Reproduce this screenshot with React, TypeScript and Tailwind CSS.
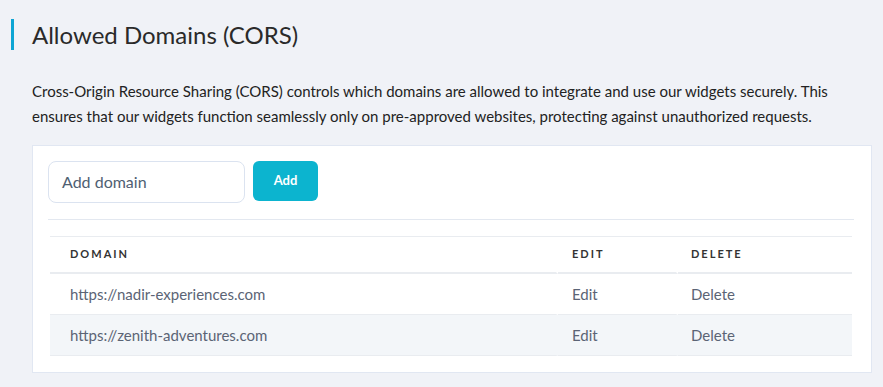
import React from "react";

const rows = ["https://nadir-experiences.com", "https://zenith-adventures.com"];

const head = "text-left h-[37px] border-b-2 border-b-[#e9ecf0] text-[11px] font-bold tracking-[2px] text-[#333]";
const cell = "h-[41px] border-b border-b-[#e9ecf0] text-[#5b6475]";
const gap = "border-r-2 border-r-transparent";

export default function App() {
  return (
    <main
      className="w-[883px] h-[387px] bg-[#f0f2f7] text-[#2b2b2b] overflow-hidden"
      style={{ fontFamily: "Lato, 'Open Sans', sans-serif" }}
    >
      <div className="pt-[19px] pl-[11px] flex items-center">
        <div className="w-[3px] h-[31px] bg-[#0ea5d4]" />
        <h1 className="ml-[18px] text-[24px] text-[#2a2a2a] leading-none">Allowed Domains (CORS)</h1>
      </div>

      <p className="mt-[29px] ml-[32px] mr-[20px] text-[15px] leading-[25px] text-[#222]">
        Cross-Origin Resource Sharing (CORS) controls which domains are allowed to integrate and use our widgets securely. This
        ensures that our widgets function seamlessly only on pre-approved websites, protecting against unauthorized requests.
      </p>

      <section className="mt-[16px] ml-[32px] w-[840px] h-[228px] bg-white border border-[#e1e7f2] px-[15px] pt-[15px]">
        <div className="flex gap-[8px] items-start">
          <div className="w-[197px] h-[42px] rounded-[8px] border border-[#dbe3f0] flex items-center px-[13px] text-[16px] text-[#4f6072]">
            Add domain
          </div>
          <button className="w-[65px] h-[40px] rounded-[6px] bg-[#0cb4cf] text-white text-[13px] font-bold">
            Add
          </button>
        </div>

        <div className="mt-[16px] mr-[2px] border-t border-[#e3e8f0]" />

        <table className="mt-[16px] ml-[2px] w-[802px] border-separate border-spacing-0 border-t border-[#e9ecf0] text-[15px]">
          <thead>
            <tr>
              <th className={`${head} ${gap} pl-[20px]`}>DOMAIN</th>
              <th className={`${head} ${gap} pl-[14px] w-[120px]`}>EDIT</th>
              <th className={`${head} pl-[13px] w-[174px]`}>DELETE</th>
            </tr>
          </thead>
          <tbody>
            {rows.map((d, i) => (
              <tr key={d} className={i % 2 ? "bg-[#f3f6f9]" : ""}>
                <td className={`${cell} ${gap} pl-[20px]`}>{d}</td>
                <td className={`${cell} ${gap} pl-[14px]`}>Edit</td>
                <td className={`${cell} pl-[13px]`}>Delete</td>
              </tr>
            ))}
          </tbody>
        </table>
      </section>
    </main>
  );
}
